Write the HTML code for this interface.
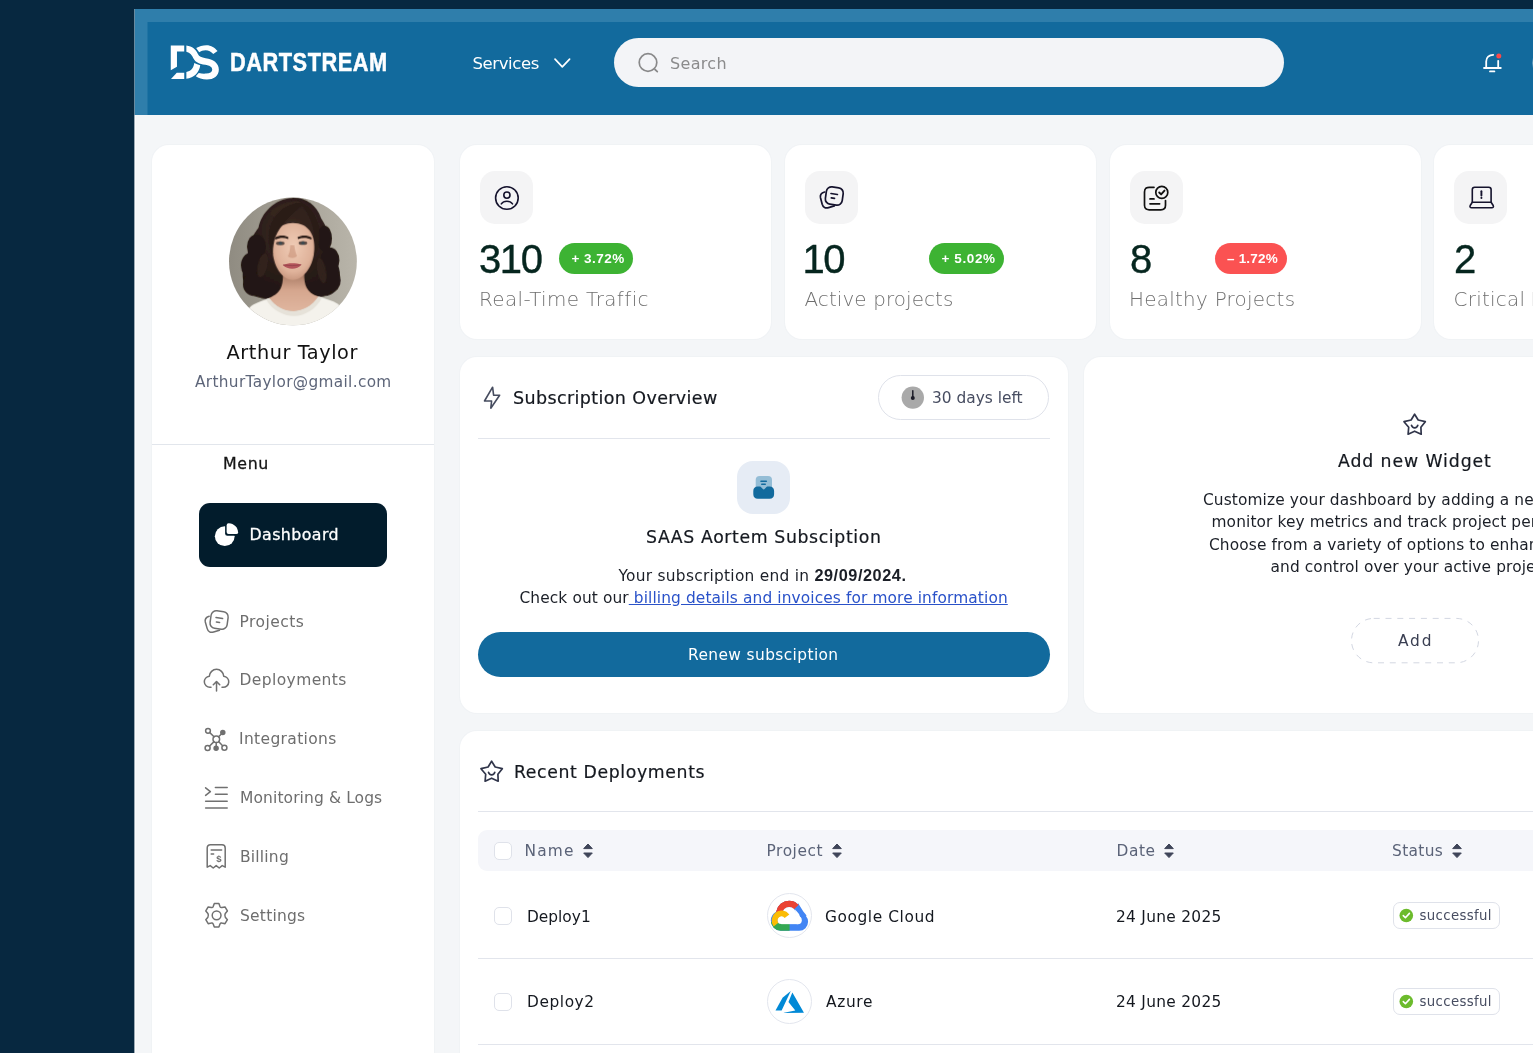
<!DOCTYPE html>
<html lang="en">
<head>
<meta charset="utf-8">
<title>Dartstream Dashboard</title>
<style>
*{box-sizing:border-box;margin:0;padding:0}
html,body{width:1533px;height:1053px;overflow:hidden;background:#072840;font-family:"DejaVu Sans","Liberation Sans",sans-serif;color:#14181f}
.abs{position:absolute}
#screen{position:absolute;left:135px;transform:translateX(-0.5px);top:9px;width:1500px;height:1100px;background:#f4f6f8;overflow:hidden}
#frame{position:absolute;left:0;top:0;width:1500px;height:106px;background:#2f7eab}
#header{position:absolute;left:13px;top:13px;width:1500px;height:93px;background:#126a9d}
#edge{position:absolute;left:0;top:106px;width:1px;height:1000px;background:#fff}
.card{position:absolute;background:#fff;border-radius:17px;box-shadow:0 0 0 1px rgba(226,231,238,0.22)}
.t{position:absolute;white-space:nowrap;line-height:1}
.ib{position:absolute;top:171px;width:53px;height:53px;border-radius:15px;background:#f4f4f5}
.num{top:238px;font-size:38.5px;color:#06261f;font-family:'Liberation Sans',sans-serif;-webkit-text-stroke:0.4px #06261f}
.bdg{position:absolute;top:242.8px;height:31.6px;border-radius:16px;background:#3db333;color:#fff;font-size:13.5px;font-weight:700;line-height:31.5px;text-align:center;white-space:nowrap}
.bt{font-family:'Liberation Sans',sans-serif;font-weight:700;font-size:13.5px;color:#fff}
.lab{top:288px;font-size:20px;color:#6f6f6f;font-weight:200}
.cb{position:absolute;left:493.8px;width:18.2px;height:18.2px;border:1.4px solid #dfe2ea;border-radius:5px;background:#fff}
.th{top:842.5px;font-size:16px;color:#5b6378}
.td{font-size:15.4px;color:#14181f}
.lg{left:767px;width:45.2px;height:45.2px;border-radius:50%;border:1.2px solid #e3e6ee;background:#fff}
.succ{font-size:14px;color:#474d61}
.wpl{font-size:15.4px;color:#1b1f27}
.med{-webkit-text-stroke:0.2px currentColor}
#menu,#m0{-webkit-text-stroke:0.3px currentColor}
.mi{font-size:15.4px;color:#6e6e6e}
/*FIT*/
#brand{left:229.50px !important;top:49.00px !important;letter-spacing:0.622px !important;text-align:left !important;width:auto !important;font-size:26.6px !important;}
#services{left:472.50px !important;top:55.72px !important;letter-spacing:-0.400px !important;text-align:left !important;width:auto !important;font-size:16.5px !important;}
#search{left:670.00px !important;top:56.10px !important;letter-spacing:0.320px !important;text-align:left !important;width:auto !important;font-size:16px !important;}
#uname{left:226.50px !important;top:342.60px !important;letter-spacing:0.567px !important;text-align:left !important;width:auto !important;font-size:19.3px !important;}
#uemail{left:195.00px !important;top:375.00px !important;letter-spacing:0.352px !important;text-align:left !important;width:auto !important;font-size:15.3px !important;}
#menu{left:223.00px !important;top:455.80px !important;letter-spacing:0.667px !important;text-align:left !important;width:auto !important;font-size:15.8px !important;}
#m0{left:249.50px !important;top:526.90px !important;letter-spacing:0.425px !important;text-align:left !important;width:auto !important;font-size:15.8px !important;}
#m1{left:239.50px !important;top:615.00px !important;letter-spacing:0.457px !important;text-align:left !important;width:auto !important;font-size:15.5px !important;}
#m2{left:239.50px !important;top:673.10px !important;letter-spacing:0.400px !important;text-align:left !important;width:auto !important;font-size:15.5px !important;}
#m3{left:239.00px !important;top:732.20px !important;letter-spacing:0.345px !important;text-align:left !important;width:auto !important;font-size:15.5px !important;}
#m4{left:240.00px !important;top:791.10px !important;letter-spacing:0.100px !important;text-align:left !important;width:auto !important;font-size:15.5px !important;}
#m5{left:240.00px !important;top:850.20px !important;letter-spacing:0.200px !important;text-align:left !important;width:auto !important;font-size:15.5px !important;}
#m6{left:240.00px !important;top:908.50px !important;letter-spacing:0.229px !important;text-align:left !important;width:auto !important;font-size:15.5px !important;}
#n1{left:479.00px !important;top:238.90px !important;letter-spacing:-1.400px !important;text-align:left !important;width:auto !important;font-size:40px !important;}
#n2{left:802.50px !important;top:238.90px !important;letter-spacing:-1.600px !important;text-align:left !important;width:auto !important;font-size:40px !important;}
#n3{left:1130.00px !important;top:238.90px !important;letter-spacing:0.000px !important;text-align:left !important;width:auto !important;font-size:40px !important;}
#n4{left:1454.00px !important;top:238.90px !important;letter-spacing:0.000px !important;text-align:left !important;width:auto !important;font-size:40px !important;}
#b1{left:571.50px !important;top:252.12px !important;letter-spacing:0.467px !important;text-align:left !important;width:auto !important;font-size:13.5px !important;}
#b2{left:941.50px !important;top:252.12px !important;letter-spacing:0.600px !important;text-align:left !important;width:auto !important;font-size:13.5px !important;}
#b3{left:1227.00px !important;top:252.12px !important;letter-spacing:0.200px !important;text-align:left !important;width:auto !important;font-size:13.5px !important;}
#l1{left:479.00px !important;top:289.60px !important;letter-spacing:0.388px !important;text-align:left !important;width:auto !important;font-size:19.9px !important;}
#l2{left:804.50px !important;top:289.60px !important;letter-spacing:0.114px !important;text-align:left !important;width:auto !important;font-size:19.9px !important;}
#l3{left:1129.00px !important;top:289.60px !important;letter-spacing:0.280px !important;text-align:left !important;width:auto !important;font-size:19.9px !important;}
#l4{left:1453.50px !important;top:289.60px !important;letter-spacing:0.280px !important;text-align:left !important;width:auto !important;font-size:19.9px !important;}
#subt{left:513.00px !important;top:390.00px !important;letter-spacing:0.380px !important;text-align:left !important;width:auto !important;font-size:17.5px !important;}
#days{left:932.00px !important;top:390.80px !important;letter-spacing:0.000px !important;text-align:left !important;width:auto !important;font-size:15.4px !important;}
#saas{left:646.00px !important;top:528.80px !important;letter-spacing:0.627px !important;text-align:left !important;width:auto !important;font-size:17.3px !important;}
#sl1{left:618.50px !important;top:568.82px !important;letter-spacing:0.263px !important;text-align:left !important;width:auto !important;font-size:15.4px !important;}
#sl2{left:519.50px !important;top:590.80px !important;letter-spacing:0.110px !important;text-align:left !important;width:auto !important;font-size:15.4px !important;}
#renew{left:688.00px !important;top:647.70px !important;letter-spacing:0.400px !important;text-align:left !important;width:auto !important;font-size:15.4px !important;}
#wt{left:1338.00px !important;top:453.24px !important;letter-spacing:0.908px !important;text-align:left !important;width:auto !important;font-size:17.3px !important;}
#wp1{left:1203.00px !important;top:492.80px !important;letter-spacing:0.110px !important;text-align:left !important;width:auto !important;font-size:15.4px !important;}
#wp2{left:1211.50px !important;top:515.10px !important;letter-spacing:0.110px !important;text-align:left !important;width:auto !important;font-size:15.4px !important;}
#wp3{left:1209.00px !important;top:537.82px !important;letter-spacing:0.110px !important;text-align:left !important;width:auto !important;font-size:15.4px !important;}
#wp4{left:1270.50px !important;top:559.96px !important;letter-spacing:0.110px !important;text-align:left !important;width:auto !important;font-size:15.4px !important;}
#addb{left:1398.00px !important;top:634.00px !important;letter-spacing:1.800px !important;text-align:left !important;width:auto !important;font-size:15.4px !important;}
#rdt{left:514.00px !important;top:763.50px !important;letter-spacing:0.624px !important;text-align:left !important;width:auto !important;font-size:17.3px !important;}
#h1{left:524.50px !important;top:844.00px !important;letter-spacing:1.200px !important;text-align:left !important;width:auto !important;font-size:15.4px !important;}
#h2{left:766.50px !important;top:844.00px !important;letter-spacing:0.567px !important;text-align:left !important;width:auto !important;font-size:15.4px !important;}
#h3{left:1116.50px !important;top:844.00px !important;letter-spacing:0.600px !important;text-align:left !important;width:auto !important;font-size:15.4px !important;}
#h4{left:1392.00px !important;top:844.00px !important;letter-spacing:0.360px !important;text-align:left !important;width:auto !important;font-size:15.4px !important;}
#d1{left:527.00px !important;top:909.62px !important;letter-spacing:0.000px !important;text-align:left !important;width:auto !important;font-size:15.4px !important;}
#d2{left:527.00px !important;top:995.20px !important;letter-spacing:0.567px !important;text-align:left !important;width:auto !important;font-size:15.4px !important;}
#p1{left:825.00px !important;top:909.62px !important;letter-spacing:0.582px !important;text-align:left !important;width:auto !important;font-size:15.4px !important;}
#p2{left:826.00px !important;top:995.20px !important;letter-spacing:0.650px !important;text-align:left !important;width:auto !important;font-size:15.4px !important;}
#dt1{left:1116.00px !important;top:909.82px !important;letter-spacing:0.291px !important;text-align:left !important;width:auto !important;font-size:15.4px !important;}
#dt2{left:1116.00px !important;top:995.40px !important;letter-spacing:0.291px !important;text-align:left !important;width:auto !important;font-size:15.4px !important;}
#s1{left:1419.50px !important;top:909.18px !important;letter-spacing:0.356px !important;text-align:left !important;width:auto !important;font-size:13.3px !important;}
#s2{left:1419.50px !important;top:994.70px !important;letter-spacing:0.356px !important;text-align:left !important;width:auto !important;font-size:13.3px !important;}
/*ENDFIT*/
</style>
</head>
<body>
<div id="screen">
  <div id="frame"></div>
  <div id="header"></div>
  <div id="edge"></div>
</div>
<!-- all following elements positioned in page coordinates -->
<div id="page" class="abs" style="left:0;top:0;width:1533px;height:1053px;overflow:hidden;opacity:0.999">

<!-- HEADER CONTENT -->
<svg class="abs" style="left:165px;top:40px" width="60" height="45" viewBox="0 0 1404 1053" fill="#fff">
  <path d="M135,130 H450 V270 H280 V625 L135,710 Z"/>
  <path d="M275,765 H450 V910 H140 Z"/>
  <path d="M500,130 C640,150 720,220 770,330 C800,390 850,410 950,425 C1130,445 1260,540 1260,690 C1260,840 1140,925 980,925 C870,925 780,895 720,850 L790,770 C850,785 900,790 960,785 C1050,780 1105,750 1105,695 C1105,630 1040,595 940,580 C800,560 720,530 670,440 C630,350 590,300 500,275 Z"/>
  <path d="M685,540 C730,565 775,580 825,590 C800,760 680,890 500,905 V750 C600,735 670,660 685,540 Z"/>
  <path d="M730,190 C800,145 880,120 970,120 C1080,120 1170,180 1230,260 L1130,330 C1080,270 1020,240 950,240 C890,240 840,260 800,285 C770,250 750,220 730,190 Z"/>
</svg>
<div id="brand" class="t" style="font-family:'Liberation Sans',sans-serif;left:230.5px;top:48px;font-size:27px;font-weight:700;color:#fff;transform-origin:0 0;transform:scaleX(0.82);-webkit-text-stroke:0.5px #fff">DARTSTREAM</div>
<div id="services" class="t" style="left:474px;top:53px;font-size:17px;color:#fff;letter-spacing:0.2px">Services</div>
<svg class="abs" style="left:553px;top:57px" width="19" height="12" viewBox="0 0 19 12" fill="none" stroke="#fff" stroke-width="1.7" stroke-linecap="round" stroke-linejoin="round"><path d="M2 2.2 L9.3 9.8 L16.6 2.2"/></svg>
<div class="abs" style="left:613.5px;top:38px;width:670px;height:49px;border-radius:25px;background:#f4f5f7"></div>
<svg class="abs" style="left:636px;top:50px" width="26" height="26" viewBox="0 0 26 26" fill="none" stroke="#8a8a8a" stroke-width="1.7" stroke-linecap="round"><circle cx="12" cy="12.5" r="8.8"/><path d="M19 19.5 L21.3 21.6"/></svg>
<div id="search" class="t" style="left:670.5px;top:54px;font-size:16.5px;color:#8c8c8c;letter-spacing:0.3px">Search</div>
<svg class="abs" style="left:1480px;top:50px" width="26" height="26" viewBox="0 0 26 26" fill="none" stroke="#fff" stroke-width="1.8" stroke-linecap="round" stroke-linejoin="round">
  <path d="M4 18 H20.8"/><path d="M6.2 18 V11.5 C6.2 7.5 9 4.8 13.2 4.8"/><path d="M18.2 10.8 V18"/><path d="M10 21.4 H14.4"/>
  <circle cx="18.8" cy="6" r="2.5" fill="#fb4a4a" stroke="none"/>
</svg>
<div class="abs" style="left:1531.5px;top:48px;width:30px;height:30px;border-radius:50%;border:1.5px solid rgba(255,255,255,0.35)"></div>
<!-- SIDEBAR -->
<div class="card" style="left:152px;top:144.5px;width:281.5px;height:940px"></div>
<svg class="abs" style="left:222px;top:190px" width="142" height="142" viewBox="0 0 1053 1053">
  <defs>
    <clipPath id="avc"><circle cx="526" cy="529" r="474"/></clipPath>
    <linearGradient id="avbg" x1="0" y1="0" x2="1" y2="0"><stop offset="0" stop-color="#8d897f"/><stop offset="0.5" stop-color="#a6a297"/><stop offset="1" stop-color="#bbb7ac"/></linearGradient>
    <radialGradient id="avskin" cx="0.5" cy="0.42" r="0.62"><stop offset="0" stop-color="#f0ccb6"/><stop offset="0.7" stop-color="#e0b39b"/><stop offset="1" stop-color="#c4927a"/></radialGradient>
    <linearGradient id="avneck" x1="0" y1="0" x2="0" y2="1"><stop offset="0" stop-color="#a87a64"/><stop offset="0.45" stop-color="#d6a78f"/><stop offset="1" stop-color="#e0b69f"/></linearGradient>
    <radialGradient id="avhair" cx="0.5" cy="0.35" r="0.7"><stop offset="0" stop-color="#3a2923"/><stop offset="1" stop-color="#1f1411"/></radialGradient>
    <filter id="avblur" x="-10%" y="-10%" width="120%" height="120%"><feGaussianBlur stdDeviation="5"/></filter>
  </defs>
  <g clip-path="url(#avc)">
    <rect width="1053" height="1053" fill="url(#avbg)"/>
    <g filter="url(#avblur)">
    <path d="M520,58 C620,55 700,110 735,210 C790,290 800,370 790,440 C840,500 890,580 870,680 C860,740 820,790 750,785 C700,800 640,790 605,740 L450,740 C430,790 380,810 320,800 C250,800 190,770 170,720 C140,640 150,560 190,470 C200,400 230,330 270,280 C290,170 390,65 520,58 Z" fill="url(#avhair)"/>
    <g fill="#241713"><ellipse cx="215" cy="560" rx="75" ry="95"/><ellipse cx="235" cy="700" rx="80" ry="85"/><ellipse cx="330" cy="745" rx="95" ry="62"/><ellipse cx="255" cy="420" rx="70" ry="90"/><ellipse cx="800" cy="520" rx="70" ry="95"/><ellipse cx="805" cy="670" rx="75" ry="90"/><ellipse cx="715" cy="735" rx="95" ry="58"/><ellipse cx="760" cy="360" rx="55" ry="95"/></g>
    <g fill="#3b2a24" opacity="0.55"><ellipse cx="300" cy="560" rx="35" ry="90" transform="rotate(12 300 560)"/><ellipse cx="740" cy="600" rx="32" ry="95" transform="rotate(-10 740 600)"/><ellipse cx="470" cy="140" rx="120" ry="40" transform="rotate(-20 470 140)"/></g>
    <path d="M180,1053 C170,940 180,880 230,850 C280,825 320,815 350,800 C400,870 470,900 535,898 C600,895 670,860 715,790 C760,805 820,820 860,845 C900,880 900,960 890,1053 Z" fill="#f4f2ec"/>
    <path d="M452,620 C452,700 445,760 350,800 C400,870 470,900 535,898 C600,895 670,860 715,790 C625,760 608,700 610,620 Z" fill="url(#avneck)"/>
    <path d="M350,800 C400,870 470,900 535,898 C600,895 670,860 715,790 L740,800 C700,880 615,932 535,935 C455,932 375,895 325,810 Z" fill="#e6e2d9"/>
    <path d="M525,245 C640,245 690,330 685,440 C680,560 610,665 525,668 C440,665 378,560 375,440 C372,330 420,245 525,245 Z" fill="url(#avskin)"/>
    <path d="M600,100 C520,180 430,260 395,350 C380,400 376,440 378,480 C345,420 335,330 365,250 C410,150 500,90 600,100 Z" fill="#2a1c17"/>
    <path d="M590,100 C650,180 680,260 684,350 C690,400 688,440 684,480 C725,420 735,330 705,240 C680,170 640,120 590,100 Z" fill="#2a1c17"/>
    </g>
    <path d="M392,352 C428,332 470,336 492,350 L490,364 C462,352 430,352 396,368 Z" fill="#2a1b16"/>
    <path d="M560,350 C590,334 632,334 664,352 L662,368 C630,352 596,352 564,364 Z" fill="#2a1b16"/>
    <ellipse cx="432" cy="395" rx="32" ry="14" fill="#5b4a43"/><ellipse cx="434" cy="395" rx="13" ry="12" fill="#3d4a50"/>
    <ellipse cx="600" cy="393" rx="32" ry="14" fill="#5b4a43"/><ellipse cx="600" cy="393" rx="13" ry="12" fill="#3d4a50"/>
    <path d="M488,492 C505,508 540,508 556,490 C546,470 540,440 536,410 L506,410 C505,440 500,470 488,492 Z" fill="#c48c72" opacity="0.55"/>
    <path d="M452,556 C490,540 546,540 588,554 C560,592 486,594 452,556 Z" fill="#b3545b"/>
    <path d="M452,556 C500,562 548,562 588,554" stroke="#8e3e46" stroke-width="5" fill="none"/>
  </g>
</svg>
<div id="uname" class="t" style="left:152px;width:281.5px;text-align:center;top:340.5px;font-size:21px;color:#111">Arthur Taylor</div>
<div id="uemail" class="t" style="left:152px;width:281.5px;text-align:center;top:373.5px;font-size:15.5px;color:#5d6579">ArthurTaylor@gmail.com</div>
<div class="abs" style="left:152px;top:444px;width:281.5px;height:1px;background:#e2e6ec"></div>
<div id="menu" class="t med" style="left:223.5px;top:454.5px;font-size:16px;color:#161616">Menu</div>

<div class="abs" style="left:199px;top:502.5px;width:187.5px;height:64.5px;border-radius:11px;background:#021c2c"></div>
<svg class="abs" style="left:212px;top:520px" width="28" height="28" viewBox="0 0 28 28">
  <circle cx="12.75" cy="16.17" r="9.9" fill="#fff"/>
  <path d="M13.1 0 V13.6 Q13.1 15.85 15.4 15.85 H28 V0 Z" fill="#021c2c"/>
  <path d="M14.63 5.4 Q14.63 3.2 16.8 3.3 C22 3.6 25.8 7.4 26.1 12.2 Q26.2 14.12 24.2 14.12 H16.6 Q14.63 14.12 14.63 12.1 Z" fill="#fff"/>
</svg>
<div id="m0" class="t med" style="left:250px;top:526px;font-size:16px;color:#fff">Dashboard</div>

<!-- Projects -->
<svg class="abs" style="left:202px;top:608px" width="28" height="28" viewBox="0 0 28 28" fill="none" stroke="#707070" stroke-width="1.5" stroke-linecap="round" stroke-linejoin="round">
  <path d="M7.2 8.2 C4 9.2 2.6 11 3.3 14 L5.2 20.6 C6.2 24 8.4 25 11.6 24 L17.5 22.2"/>
  <rect x="8.5" y="3.2" width="17.2" height="17.6" rx="5.2" transform="rotate(8 17 12)"/>
  <path d="M14 9.6 L20.6 10.6"/><path d="M14.4 14 L17.6 14.5"/>
</svg>
<div id="m1" class="t mi" style="left:240.5px;top:612.6px">Projects</div>
<!-- Deployments -->
<svg class="abs" style="left:202px;top:667px" width="28" height="28" viewBox="0 0 28 28" fill="none" stroke="#707070" stroke-width="1.5" stroke-linecap="round" stroke-linejoin="round">
  <path d="M9 20.35 H7.95 A5.6 5.6 0 0 1 7.34 9.18 A7.2 7.2 0 0 1 21.72 9.18 A5.6 5.6 0 0 1 21.05 20.35 H20"/>
  <path d="M14.53 24 V14.9"/><path d="M11.3 17.8 L14.53 14.6 L17.76 17.8"/>
</svg>
<div id="m2" class="t mi" style="left:240.5px;top:671.4px">Deployments</div>
<!-- Integrations -->
<svg class="abs" style="left:202px;top:725px" width="28" height="28" viewBox="0 0 28 28" fill="none" stroke="#707070" stroke-width="1.5" stroke-linecap="round" stroke-linejoin="round">
  <circle cx="14.3" cy="14.2" r="3.3"/>
  <circle cx="6" cy="5.8" r="2.4"/><circle cx="20.8" cy="7.6" r="2" fill="#707070"/>
  <circle cx="5.6" cy="23" r="2.5"/><circle cx="14.1" cy="23.3" r="2" fill="#707070"/><circle cx="22.4" cy="22.7" r="2.5"/>
  <path d="M7.8 7.6 L12 11.8"/><path d="M19.4 9 L16.6 11.8"/><path d="M7.4 21.2 L12 16.6"/><path d="M14.2 17.6 V21"/><path d="M16.6 16.6 L20.6 20.8"/>
</svg>
<div id="m3" class="t mi" style="left:239.5px;top:730px">Integrations</div>
<!-- Monitoring -->
<svg class="abs" style="left:202px;top:784px" width="28" height="28" viewBox="0 0 28 28" fill="none" stroke="#707070" stroke-width="1.5" stroke-linecap="round" stroke-linejoin="round">
  <path d="M3.6 3.8 L8.4 7.6 L3.6 11.4"/><path d="M13.4 3.5 H25.2"/><path d="M13.4 10.3 H25.2"/><path d="M3.6 17.2 H25.2"/><path d="M3.6 24.1 H25.2"/>
</svg>
<div id="m4" class="t mi" style="left:240.5px;top:788.6px">Monitoring &amp; Logs</div>
<!-- Billing -->
<svg class="abs" style="left:202px;top:842px" width="28" height="28" viewBox="0 0 28 28" fill="none" stroke="#707070" stroke-width="1.5" stroke-linecap="round" stroke-linejoin="round">
  <path d="M5.2 25.2 V6 C5.2 4 6.4 2.8 8.4 2.8 H20 C22 2.8 23.2 4 23.2 6 V25.2 L20.2 23.6 L17.2 26 L14.2 23.6 L11.2 26 L8.2 23.6 Z"/>
  <path d="M9.2 7.9 H19.6"/><path d="M9.2 11.9 H11.6"/>
  <text x="17" y="20" font-family="Liberation Sans, sans-serif" font-size="9.5" font-weight="700" fill="#707070" stroke="none" text-anchor="middle">$</text>
</svg>
<div id="m5" class="t mi" style="left:240.5px;top:847.5px">Billing</div>
<!-- Settings -->
<svg class="abs" style="left:202px;top:901px" width="28" height="28" viewBox="0 0 28 28" fill="none" stroke="#707070" stroke-width="1.5" stroke-linecap="round" stroke-linejoin="round">
  <circle cx="14.6" cy="14.3" r="4.4"/>
  <path d="M12.3 2.6 H16.9 L18 5.6 C18.4 6.4 19 6.7 19.9 6.5 L23 5.9 L25.4 9.9 L23.3 12.4 C22.7 13.6 22.7 15 23.3 16.2 L25.4 18.7 L23 22.7 L19.9 22.1 C19 21.9 18.4 22.2 18 23 L16.9 26 H12.3 L11.2 23 C10.8 22.2 10.2 21.9 9.3 22.1 L6.2 22.7 L3.8 18.7 L5.9 16.2 C6.5 15 6.5 13.6 5.9 12.4 L3.8 9.9 L6.2 5.9 L9.3 6.5 C10.2 6.7 10.8 6.4 11.2 5.6 Z"/>
</svg>
<div id="m6" class="t mi" style="left:240.5px;top:906px">Settings</div>
<!-- STATS -->
<div class="card" style="left:460px;top:144.5px;width:311px;height:194.5px"></div>
<div class="card" style="left:785px;top:144.5px;width:311px;height:194.5px"></div>
<div class="card" style="left:1109.5px;top:144.5px;width:311px;height:194.5px"></div>
<div class="card" style="left:1434px;top:144.5px;width:311px;height:194.5px"></div>
<div class="ib" style="left:480px"></div><div class="ib" style="left:805px"></div><div class="ib" style="left:1130px"></div><div class="ib" style="left:1454.2px"></div>
<!-- user icon -->
<svg class="abs" style="left:493px;top:183.5px" width="28" height="28" viewBox="0 0 28 28" fill="none" stroke="#15132d" stroke-width="1.6" stroke-linecap="round" stroke-linejoin="round">
  <circle cx="13.9" cy="14" r="11.3"/><circle cx="13.9" cy="11.1" r="3.1"/><path d="M8.3 19.9 C10.8 16.4 17 16.4 19.5 19.9"/>
</svg>
<!-- projects icon -->
<svg class="abs" style="left:817px;top:183.5px" width="28" height="28" viewBox="0 0 28 28" fill="none" stroke="#15132d" stroke-width="1.7" stroke-linecap="round" stroke-linejoin="round">
  <path d="M7.6 8 C4.2 9 2.8 10.8 3.5 13.8 L5.2 20.2 C6.2 23.6 8.4 24.6 11.6 23.6 L17.3 21.9"/>
  <rect x="8.8" y="3.3" width="17" height="17.4" rx="5.2" transform="rotate(8 17.3 12)"/>
  <path d="M14 9.5 L20.4 10.5"/><path d="M14.3 13.9 L17.5 14.4"/>
</svg>
<!-- healthy icon -->
<svg class="abs" style="left:1142px;top:183.5px" width="28" height="28" viewBox="0 0 28 28" fill="none" stroke="#111" stroke-width="1.7" stroke-linecap="round" stroke-linejoin="round">
  <path d="M12 3.3 H7.2 C4 3.3 2.5 4.9 2.5 8 V21.2 C2.5 24.3 4 25.8 7.2 25.8 H18.8 C22 25.8 23.5 24.3 23.5 21.2 V16.5"/>
  <circle cx="19.8" cy="8.4" r="6"/><path d="M17.2 8.5 L19.1 10.4 L22.5 6.6" stroke-width="1.9"/>
  <path d="M8 14.9 H12"/><path d="M8 19.8 H17.6"/>
</svg>
<!-- laptop icon -->
<svg class="abs" style="left:1466.5px;top:183.5px" width="28" height="28" viewBox="0 0 28 28" fill="none" stroke="#15132d" stroke-width="1.6" stroke-linecap="round" stroke-linejoin="round">
  <path d="M5.3 18.3 V5.6 C5.3 4 6.1 3.2 7.7 3.2 H21.7 C23.3 3.2 24.1 4 24.1 5.6 V18.3"/>
  <path d="M5.3 18.3 H24.1 L26.2 21.5 C26.8 22.7 26.2 23.7 24.8 23.7 H4.6 C3.2 23.7 2.6 22.7 3.2 21.5 Z"/>
  <path d="M14.4 7.2 V11.6" stroke-width="1.9"/><path d="M14.4 13.8 V14" stroke-width="1.9"/>
</svg>
<div id="n1" class="t num" style="left:478.5px">310</div>
<div id="n2" class="t num" style="left:803px">10</div>
<div id="n3" class="t num" style="left:1129px">8</div>
<div id="n4" class="t num" style="left:1453.5px">2</div>
<div class="bdg" style="left:559.4px;width:73.2px"></div><div id="b1" class="t bt" style="left:571.5px;top:252px">+ 3.72%</div>
<div class="bdg" style="left:929.1px;width:74.7px"></div><div id="b2" class="t bt" style="left:941.5px;top:252px">+ 5.02%</div>
<div class="bdg" style="left:1215.3px;width:71.3px;background:#fb5252"></div><div id="b3" class="t bt" style="left:1227.4px;top:252px">&#8211; 1.72%</div>
<div id="l1" class="t lab" style="left:480.5px">Real-Time Traffic</div>
<div id="l2" class="t lab" style="left:805px">Active projects</div>
<div id="l3" class="t lab" style="left:1130.5px">Healthy Projects</div>
<div id="l4" class="t lab" style="left:1455px;word-spacing:-1.5px">Critical Issues</div>
<!-- SUBSCRIPTION -->
<div class="card" style="left:460px;top:356.5px;width:608px;height:356.5px"></div>
<svg class="abs" style="left:480px;top:383px" width="24" height="30" viewBox="0 0 24 30" fill="none" stroke="#464c5f" stroke-width="1.6" stroke-linejoin="round" stroke-linecap="round"><path d="M12.6 4.2 L4.5 18 H11.6 L10.8 25.2 L19.6 12.2 H13.6 Z"/></svg>
<div id="subt" class="t med" style="left:514px;top:388px;font-size:18.5px;color:#14181f">Subscription Overview</div>
<div class="abs" style="left:878px;top:375px;width:171px;height:44.5px;border:1px solid #dfe2ea;border-radius:23px;background:#fff"></div>
<svg class="abs" style="left:900px;top:385px" width="26" height="26" viewBox="0 0 26 26"><circle cx="12.8" cy="12.6" r="11.2" fill="#a9a9a9"/><path d="M12.8 5.8 V12.6" stroke="#1c1c28" stroke-width="1.5" stroke-linecap="round"/><circle cx="12.8" cy="12.9" r="2" fill="#1c1c28"/></svg>
<div id="days" class="t" style="left:933px;top:389.5px;font-size:16px;color:#474d61">30 days left</div>
<div class="abs" style="left:478px;top:437.5px;width:571.5px;height:1px;background:#e2e5ec"></div>
<div class="abs" style="left:737px;top:461px;width:53px;height:53px;border-radius:16px;background:#e6ecf5"></div>
<svg class="abs" style="left:750px;top:473px" width="28" height="28" viewBox="0 0 28 28">
  <rect x="5.7" y="3" width="16.3" height="15" rx="4" fill="#94bdd6"/>
  <rect x="10.2" y="7.5" width="6.9" height="1.6" rx="0.8" fill="#126a9d"/><rect x="11" y="10.5" width="5" height="1.6" rx="0.8" fill="#126a9d"/>
  <path d="M7.8 13.6 H9.4 C10.4 13.6 11 14 11.6 14.7 L12.6 15.8 C13.3 16.6 14.1 16.6 14.8 15.8 L15.8 14.7 C16.4 14 17 13.6 18 13.6 H19.6 C22.4 13.6 24.1 15.3 24.1 18.1 V21.3 C24.1 24.1 22.4 25.8 19.6 25.8 H7.8 C5 25.8 3.3 24.1 3.3 21.3 V18.1 C3.3 15.3 5 13.6 7.8 13.6 Z" fill="#126a9d"/>
</svg>
<div id="saas" class="t med" style="left:460px;width:607.5px;text-align:center;top:527px;font-size:19px;color:#14181f">SAAS Aortem Subsciption</div>
<div id="sl1" class="t" style="left:460px;width:607.5px;text-align:center;top:566.5px;font-size:16px;color:#1b1f27">Your subscription end in <b style="font-family:'Liberation Sans',sans-serif;font-size:16.3px;letter-spacing:0.55px;line-height:0">29/09/2024.</b></div>
<div id="sl2" class="t" style="left:460px;width:607.5px;text-align:center;top:589px;font-size:16px;color:#1b1f27">Check out our<span style="color:#2a52c9;text-decoration:underline"> billing details and invoices for more information</span></div>
<div class="abs" style="left:478px;top:631.5px;width:571.5px;height:45px;border-radius:23px;background:#126a9d"></div>
<div id="renew" class="t" style="left:478px;width:571.5px;text-align:center;top:646px;font-size:16px;color:#fff">Renew subsciption</div>
<!-- WIDGET -->
<div class="card" style="left:1084.2px;top:356.5px;width:660px;height:356.5px"></div>
<svg class="abs" style="left:1395px;top:405px" width="40" height="40" viewBox="0 0 40 40" fill="none" stroke="#30354a" stroke-width="1.7" stroke-linejoin="round" stroke-linecap="round"><path d="M19.6 9.2 L23.2 15 L30.3 16.7 L25.9 22.2 L26.2 29.2 L19.6 26.2 L13.1 29.2 L13.7 22.2 L9 16.7 L16.1 15 Z"/><path d="M16.5 20.3 C17.4 23.6 21.9 23.6 22.8 20.3"/></svg>
<div id="wt" class="t med" style="left:1164.5px;width:500px;text-align:center;top:452px;font-size:19px;color:#14181f">Add new Widget</div>
<div id="wp1" class="t wpl" style="left:1203.4px;top:491px">Customize your dashboard by adding a new widget to</div>
<div id="wp2" class="t wpl" style="left:1213.3px;top:513.5px">monitor key metrics and track project performance.</div>
<div id="wp3" class="t wpl" style="left:1210px;top:536px">Choose from a variety of options to enhance visibility</div>
<div id="wp4" class="t wpl" style="left:1271.5px;top:558.5px">and control over your active projects.</div>
<svg class="abs" style="left:1349px;top:616px" width="132" height="49" viewBox="0 0 132 49"><rect x="2.5" y="2.4" width="127" height="44.4" rx="22.2" fill="#fff" stroke="#d3d7e2" stroke-width="1" stroke-dasharray="6 5.8"/></svg>
<div id="addb" class="t" style="left:1351px;width:127px;text-align:center;top:632.5px;font-size:16px;color:#3a3f52">Add</div>
<!-- DEPLOYMENTS -->
<div class="card" style="left:460px;top:731px;width:1290px;height:400px"></div>
<svg class="abs" style="left:472px;top:751.6px" width="40" height="40" viewBox="0 0 40 40" fill="none" stroke="#30354a" stroke-width="1.7" stroke-linejoin="round" stroke-linecap="round"><path d="M19.6 9.2 L23.2 15 L30.3 16.7 L25.9 22.2 L26.2 29.2 L19.6 26.2 L13.1 29.2 L13.7 22.2 L9 16.7 L16.1 15 Z"/><path d="M16.5 20.3 C17.4 23.6 21.9 23.6 22.8 20.3"/></svg>
<div id="rdt" class="t med" style="left:514px;top:761.5px;font-size:19px;color:#14181f">Recent Deployments</div>
<div class="abs" style="left:478px;top:811px;width:1300px;height:1px;background:#e2e5ec"></div>
<div class="abs" style="left:478px;top:830.3px;width:1300px;height:40.3px;border-radius:9px;background:#f5f6fa"></div>
<div class="cb" style="top:841.5px"></div><div class="cb" style="top:907px"></div><div class="cb" style="top:993px"></div>
<div id="h1" class="t th" style="left:525.5px">Name</div><svg class="abs" style="left:581.5px;top:842px" width="12" height="18" viewBox="0 0 12 18" fill="#3f4559" stroke="#3f4559" stroke-width="1" stroke-linejoin="round"><path d="M6 2 L10.3 6.6 H1.7 Z"/><path d="M6 15.6 L10.3 11 H1.7 Z"/></svg>
<div id="h2" class="t th" style="left:767.5px">Project</div><svg class="abs" style="left:831px;top:842px" width="12" height="18" viewBox="0 0 12 18" fill="#3f4559" stroke="#3f4559" stroke-width="1" stroke-linejoin="round"><path d="M6 2 L10.3 6.6 H1.7 Z"/><path d="M6 15.6 L10.3 11 H1.7 Z"/></svg>
<div id="h3" class="t th" style="left:1117.5px">Date</div><svg class="abs" style="left:1163px;top:842px" width="12" height="18" viewBox="0 0 12 18" fill="#3f4559" stroke="#3f4559" stroke-width="1" stroke-linejoin="round"><path d="M6 2 L10.3 6.6 H1.7 Z"/><path d="M6 15.6 L10.3 11 H1.7 Z"/></svg>
<div id="h4" class="t th" style="left:1392.5px">Status</div><svg class="abs" style="left:1451px;top:842px" width="12" height="18" viewBox="0 0 12 18" fill="#3f4559" stroke="#3f4559" stroke-width="1" stroke-linejoin="round"><path d="M6 2 L10.3 6.6 H1.7 Z"/><path d="M6 15.6 L10.3 11 H1.7 Z"/></svg>
<div id="d1" class="t td" style="left:528px;top:908px">Deploy1</div>
<div id="d2" class="t td" style="left:528px;top:994px">Deploy2</div>
<div class="abs lg" style="top:893.3px"></div><div class="abs lg" style="top:978.8px"></div>
<!-- google cloud logo -->
<svg class="abs" style="left:765px;top:892px" width="50" height="48" viewBox="0 0 50 48">
  <defs><clipPath id="gcl"><circle cx="24.16" cy="21.88" r="13.2"/><circle cx="15.9" cy="28.6" r="10.1"/><circle cx="34.18" cy="29.85" r="8.9"/><rect x="15.7" y="29" width="18.5" height="9.75"/><path d="M33 11 L38.3 19.6 Q40 21.5 41.6 23.8 L34 27 Z"/></clipPath></defs>
  <g clip-path="url(#gcl)">
    <rect x="0" y="0" width="50" height="48" fill="#4285f4"/>
    <path d="M0 48 V30 H24.6 V48 Z" fill="#34a853"/>
    <path d="M14.29 23.62 A10.02 10.02 0 0 1 31.37 14.92" fill="none" stroke="#ea4335" stroke-width="6.6" />
    <path d="M0 0 H33.5 L29 17.5 L24 12 L10 20 L0 24 Z" fill="#ea4335"/>
  </g>
  <circle cx="24.16" cy="21.88" r="6.84" fill="#fff"/><circle cx="32.8" cy="28.2" r="4" fill="#fff"/><circle cx="16.2" cy="28" r="3.9" fill="#fff"/><rect x="16.2" y="24.2" width="16.6" height="7.95" fill="#fff"/>
  <path d="M30.2 17.5 L34 22 L35.5 26 L30 26 Z" fill="#fff"/>
  <path d="M11.0 32.6 A6.9 6.9 0 1 1 22.0 24.2" fill="none" stroke="#fbbc05" stroke-width="5.9"/>
</svg>
<!-- azure logo -->
<svg class="abs" style="left:765px;top:978px" width="50" height="48" viewBox="0 0 50 48" fill="#0089d6">
  <path d="M25.75 13 L17.55 19.83 L10.48 32.6 L16.64 32.45 Z"/>
  <path d="M27.35 14.6 L38.97 34.87 L17.78 35.1 L30.3 32.6 L23.47 23.93 Z"/>
</svg>
<div id="p1" class="t td" style="left:825.5px;top:908px">Google Cloud</div>
<div id="p2" class="t td" style="left:825.5px;top:994px">Azure</div>
<div id="dt1" class="t td" style="left:1117px;top:908px">24 June 2025</div>
<div id="dt2" class="t td" style="left:1117px;top:994px">24 June 2025</div>
<div class="abs" style="left:1393px;top:902.3px;width:106.5px;height:27px;border:1px solid #dfe2ea;border-radius:7px;background:#fff"></div>
<svg class="abs" style="left:1398px;top:907.3px" width="17" height="17" viewBox="0 0 17 17"><circle cx="8.3" cy="8.5" r="6.8" fill="#6cbb2c"/><path d="M5.3 8.6 L7.4 10.7 L11.4 6.4" fill="none" stroke="#fff" stroke-width="1.6" stroke-linecap="round" stroke-linejoin="round"/></svg>
<div id="s1" class="t succ" style="left:1420px;top:908.3px">successful</div>
<div class="abs" style="left:1393px;top:988.2px;width:106.5px;height:27px;border:1px solid #dfe2ea;border-radius:7px;background:#fff"></div>
<svg class="abs" style="left:1398px;top:993.2px" width="17" height="17" viewBox="0 0 17 17"><circle cx="8.3" cy="8.5" r="6.8" fill="#6cbb2c"/><path d="M5.3 8.6 L7.4 10.7 L11.4 6.4" fill="none" stroke="#fff" stroke-width="1.6" stroke-linecap="round" stroke-linejoin="round"/></svg>
<div id="s2" class="t succ" style="left:1420px;top:994.3px">successful</div>

<div class="abs" style="left:478px;top:958px;width:1300px;height:1px;background:#e2e5ec"></div>
<div class="abs" style="left:478px;top:1044px;width:1300px;height:1px;background:#e2e5ec"></div>

</div>
</body>
</html>
